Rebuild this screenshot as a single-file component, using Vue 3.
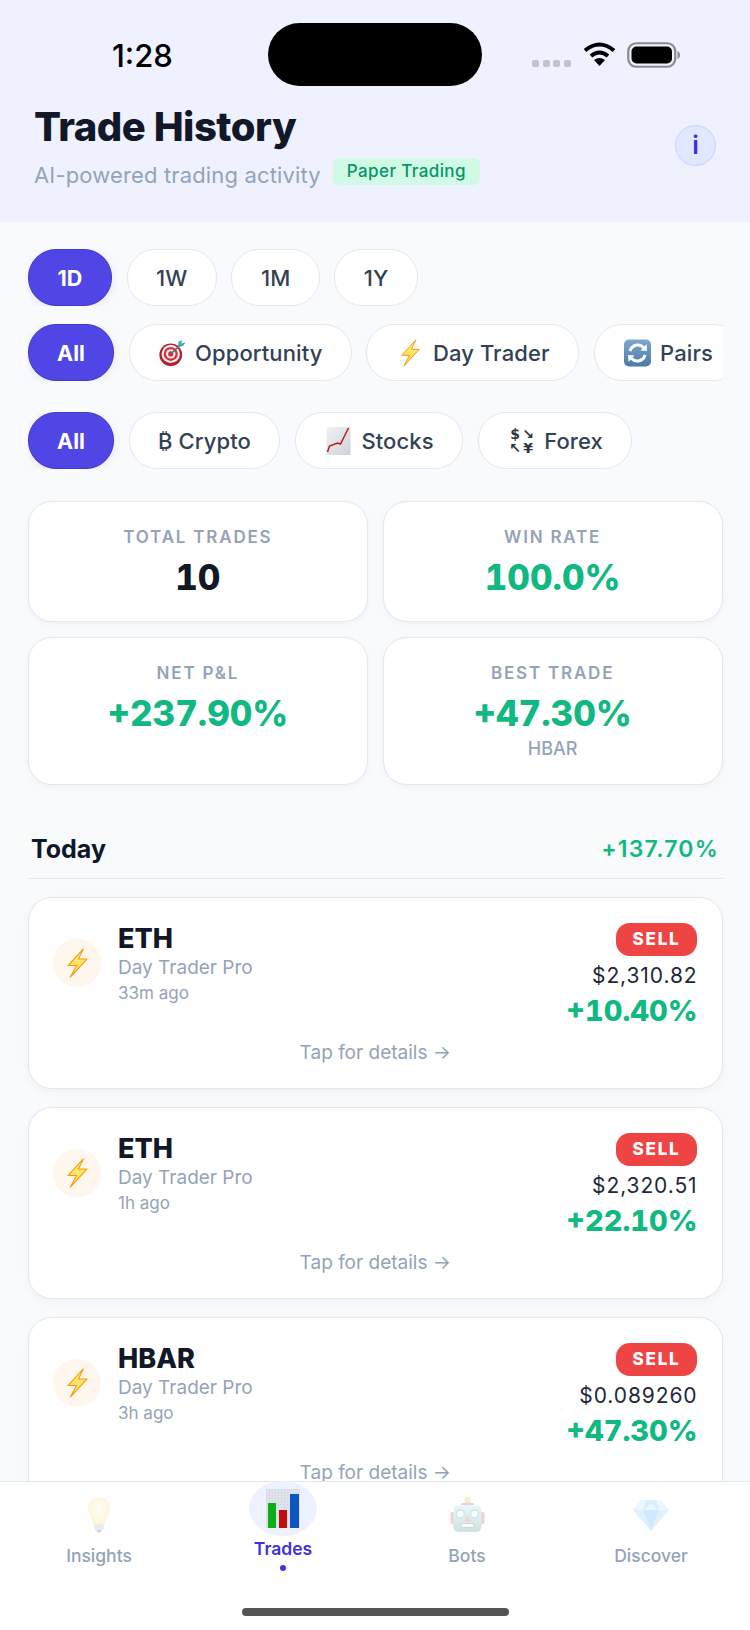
<template>
  <div class="screen">
    <svg class="sprite" width="0" height="0" aria-hidden="true">
      <defs>
        <linearGradient id="bolt-fill" x1="0" y1="0" x2="0" y2="1">
          <stop offset="0" stop-color="#fff08a" />
          <stop offset="1" stop-color="#ffd84a" />
        </linearGradient>
        <linearGradient id="sync-fill" x1="0" y1="0" x2="0" y2="1">
          <stop offset="0" stop-color="#7fa6cf" />
          <stop offset="1" stop-color="#4a7aa8" />
        </linearGradient>
        <linearGradient id="paper-fill" x1="0" y1="0" x2="1" y2="1">
          <stop offset="0" stop-color="#eef1f5" />
          <stop offset="1" stop-color="#cfd3d8" />
        </linearGradient>
        <linearGradient id="robot-fill" x1="0" y1="0" x2="0" y2="1">
          <stop offset="0" stop-color="#dfeeef" />
          <stop offset="1" stop-color="#a3c4c9" />
        </linearGradient>
        <radialGradient id="bulb-fill" cx="0.5" cy="0.4" r="0.6">
          <stop offset="0" stop-color="#fffdf2" />
          <stop offset="1" stop-color="#ffe9a8" />
        </radialGradient>
        <pattern id="grid-lines" width="3" height="3" patternUnits="userSpaceOnUse">
          <path d="M3 0H0V3" fill="none" stroke="#c9d0d9" stroke-width="0.6" />
        </pattern>
      </defs>
      <symbol id="target" viewBox="0 0 32 32">
        <circle cx="14" cy="18" r="13" fill="#b3202a" />
        <circle cx="14" cy="17" r="10.5" fill="#f4f1ee" />
        <circle cx="14" cy="17" r="8" fill="#d8303a" />
        <circle cx="14" cy="17" r="5.4" fill="#f4f1ee" />
        <circle cx="14" cy="17" r="3" fill="#d8303a" />
        <path d="M14 17L25 7" stroke="#5a6c78" stroke-width="1.6" />
        <path d="M22 9l1-6 4-2-1 4 5-1-3 4-6 1z" fill="#3fa9b8" />
      </symbol>
      <symbol id="bolt" viewBox="0 0 18 26">
        <path d="M14 .8L.8 15.2h7.4L2.8 25.2 17.2 9.6H9.800z" fill="url(#bolt-fill)" stroke="#f59a0b" stroke-width="0.9" stroke-linejoin="round" />
      </symbol>
      <symbol id="sync" viewBox="0 0 28 28">
        <rect x="0.5" y="0.5" width="27" height="27" rx="5" fill="url(#sync-fill)" />
        <path d="M6.5 12a8 8 0 0 1 13.5-3.5" fill="none" stroke="#fff" stroke-width="3" />
        <path d="M17 11.5l6.5.5-.5-7z" fill="#fff" />
        <path d="M21.5 16a8 8 0 0 1-13.5 3.5" fill="none" stroke="#fff" stroke-width="3" />
        <path d="M11 16.5l-6.5-.5.5 7z" fill="#fff" />
      </symbol>
      <symbol id="trend" viewBox="0 0 24 28">
        <rect width="24" height="28" fill="url(#paper-fill)" />
        <path d="M1 25l2-6 8-3 3 1 3-6 5-10" fill="none" stroke="#c4161c" stroke-width="1.5" />
      </symbol>
      <symbol id="bulb" viewBox="0 0 24 37">
        <path d="M12 1C5.500 1 1 6 1 12c0 6 4.500 10 6 19h10c1.500-9 6-13 6-19C23 6 18.500 1 12 1z" fill="url(#bulb-fill)" />
        <rect x="7.500" y="28" width="9" height="6" rx="1" fill="#d4d7da" />
        <path d="M9 34h6l-1.500 2.500h-3z" fill="#a8acb0" />
      </symbol>
      <symbol id="bars" viewBox="0 0 34 39">
        <rect width="34" height="39" fill="#dfe5ec" />
        <rect width="34" height="39" fill="url(#grid-lines)" />
        <rect x="2" y="14" width="8" height="25" fill="#0cae18" />
        <rect x="13" y="21" width="8" height="18" fill="#c40d0d" />
        <rect x="24" y="5" width="9" height="34" fill="#0b57bd" />
      </symbol>
      <symbol id="robot" viewBox="0 0 35 35">
        <rect x="0.500" y="15" width="5" height="12" rx="2" fill="#e6a5a5" />
        <rect x="29.500" y="15" width="5" height="12" rx="2" fill="#e6a5a5" />
        <rect x="15" y="3" width="5" height="5" fill="#b8adc9" />
        <circle cx="17.500" cy="3" r="3" fill="#ffd98a" />
        <rect x="11" y="6" width="13" height="3" rx="1.500" fill="#b8adc9" />
        <rect x="3.500" y="8" width="28" height="27" rx="5" fill="url(#robot-fill)" />
        <circle cx="10.500" cy="17" r="4" fill="#fff" stroke="#8fdcee" stroke-width="1.800" />
        <circle cx="24.500" cy="17" r="4" fill="#fff" stroke="#8fdcee" stroke-width="1.800" />
        <path d="M17.500 18l3 6h-6z" fill="#eda0a0" />
        <rect x="11" y="26.500" width="13" height="4" rx="1.500" fill="#f3f4f4" stroke="#7d8f92" stroke-width="0.600" />
      </symbol>
      <symbol id="gem" viewBox="0 0 36 32">
        <path d="M9 1h18l9 10-18 21L0 11z" fill="#bfe5fd" />
        <path d="M0 11h36L27 1H9z" fill="#d7f0ff" />
        <path d="M10 11h16l-8 21z" fill="#a5d6f8" />
        <path d="M13 1l-3 10 8-6 8 6-3-10z" fill="#b9dff9" />
      </symbol>
    </svg>

    <header class="top">
      <div class="status">
        <div class="status-left"><span class="clock">1:28</span></div>
        <div class="island"></div>
        <div class="status-right">
          <div class="signal">
            <i v-for="n in 4" :key="n"></i>
          </div>
          <svg class="wifi" width="33" height="24" viewBox="0 0 33 24">
            <path d="M2 8.500Q16.500 -3.500 31 8.500" fill="none" stroke="#000" stroke-width="4" />
            <path d="M8 14Q16.500 7 25 14" fill="none" stroke="#000" stroke-width="4" />
            <path d="M16.500 24L11 18Q16.500 14 22 18z" fill="#000" />
          </svg>
          <svg class="battery" width="53" height="26" viewBox="0 0 53 26">
            <rect x="1.250" y="1.250" width="47" height="23.500" rx="8" fill="none" stroke="#8a8a8e" stroke-width="2.200" />
            <rect x="4.500" y="4.500" width="40.500" height="17" rx="5" fill="#000" />
            <path d="M50.500 9c1.500.4 2.500 2 2.500 4s-1 3.600-2.500 4z" fill="#8a8a8e" />
          </svg>
        </div>
      </div>
      <div class="heading">
        <div>
          <h1>Trade History</h1>
          <div class="subline">
            <span class="subtitle">AI-powered trading activity</span>
            <span class="paper">Paper Trading</span>
          </div>
        </div>
        <button class="info" type="button">i</button>
      </div>
    </header>

    <main class="content">
      <div class="chips">
        <span v-for="(p, i) in periods" :key="p" class="chip" :class="{ active: i === 0 }">{{ p }}</span>
      </div>
      <div class="chips strategies">
        <span v-for="(s, i) in strategies" :key="s.label" class="chip wide" :class="{ active: i === 0 }">
          <svg v-if="s.icon" class="emoji"><use :href="'#' + s.icon" /></svg>
          {{ s.label }}
        </span>
      </div>
      <div class="chips markets">
        <span v-for="(m, i) in markets" :key="m.label" class="chip wide" :class="{ active: i === 0 }">
          <span v-if="m.icon === 'forex'" class="emoji forex">
            <b>$</b><b>↘</b><b>↖</b><b>¥</b>
          </span>
          <svg v-else-if="m.icon" class="emoji"><use :href="'#' + m.icon" /></svg>
          {{ m.label }}
        </span>
      </div>

      <section class="stats">
        <div v-for="s in stats" :key="s.label" class="stat">
          <div class="stat-label">{{ s.label }}</div>
          <div class="stat-value" :class="{ up: s.up }">{{ s.value }}</div>
          <div v-if="s.sub" class="stat-sub">{{ s.sub }}</div>
        </div>
      </section>

      <div class="day">
        <span class="day-name">Today</span>
        <span class="day-total">+137.70%</span>
      </div>

      <article v-for="t in trades" :key="t.price" class="trade">
        <div class="trade-row">
          <div class="trade-left">
            <div class="trade-icon">
              <svg width="21" height="30"><use href="#bolt" /></svg>
            </div>
            <div>
              <div class="symbol">{{ t.symbol }}</div>
              <div class="bot">Day Trader Pro</div>
              <div class="ago">{{ t.ago }}</div>
            </div>
          </div>
          <div class="trade-right">
            <span class="sell">SELL</span>
            <div class="price">{{ t.price }}</div>
            <div class="pnl">{{ t.pnl }}</div>
          </div>
        </div>
        <div class="tap">Tap for details →</div>
      </article>
    </main>

    <nav class="tabs">
      <div v-for="t in tabs" :key="t.label" class="tab" :class="{ current: t.current }">
        <div class="tab-icon">
          <svg :width="t.w" :height="t.h"><use :href="'#' + t.icon" /></svg>
        </div>
        <span class="tab-label">{{ t.label }}</span>
        <i v-if="t.current" class="tab-dot"></i>
      </div>
      <div class="home-bar"></div>
    </nav>
  </div>
</template>

<script setup>
const periods = ["1D", "1W", "1M", "1Y"];

const strategies = [
  { label: "All" },
  { label: "Opportunity", icon: "target" },
  { label: "Day Trader", icon: "bolt" },
  { label: "Pairs", icon: "sync" },
];

const markets = [
  { label: "All" },
  { label: "₿ Crypto" },
  { label: "Stocks", icon: "trend" },
  { label: "Forex", icon: "forex" },
];

const stats = [
  { label: "TOTAL TRADES", value: "10" },
  { label: "WIN RATE", value: "100.0%", up: true },
  { label: "NET P&L", value: "+237.90%", up: true },
  { label: "BEST TRADE", value: "+47.30%", up: true, sub: "HBAR" },
];

const trades = [
  { symbol: "ETH", ago: "33m ago", price: "$2,310.82", pnl: "+10.40%" },
  { symbol: "ETH", ago: "1h ago", price: "$2,320.51", pnl: "+22.10%" },
  { symbol: "HBAR", ago: "3h ago", price: "$0.089260", pnl: "+47.30%" },
];

const tabs = [
  { label: "Insights", icon: "bulb", w: 24, h: 37 },
  { label: "Trades", icon: "bars", w: 34, h: 39, current: true },
  { label: "Bots", icon: "robot", w: 35, h: 35 },
  { label: "Discover", icon: "gem", w: 36, h: 32 },
];
</script>

<style scoped>
.screen {
  position: relative;
  display: flex;
  flex-direction: column;
  width: 750px;
  height: 1630px;
  overflow: hidden;
  background: #f8fafc;
  font-family: Inter, "Liberation Sans", sans-serif;
  color: #0f172a;
}

.sprite {
  position: absolute;
}

.top {
  flex: none;
  height: 222px;
  background: #eff1ff;
}

.status {
  display: flex;
  padding-top: 23px;
}

.status-left {
  width: 268px;
  padding: 18px 0 0 112px;
  box-sizing: border-box;
}

.clock {
  font-size: 31px;
  line-height: 30px;
  font-weight: 500;
  color: #000;
}

.island {
  width: 214px;
  height: 63px;
  border-radius: 32px;
  background: #000;
}

.status-right {
  display: flex;
  align-items: flex-start;
  padding: 19px 0 0 50px;
}

.signal {
  display: flex;
  gap: 3.5px;
  margin: 18px 12px 0 0;
}

.signal i {
  width: 7px;
  height: 7px;
  border-radius: 2px;
  background: #bfc3cc;
}

.battery {
  margin: 0 0 0 11px;
}

.heading {
  display: flex;
  align-items: center;
  justify-content: space-between;
  padding: 17px 34px 0 34px;
}

h1 {
  margin: 0;
  font-size: 40px;
  line-height: 48px;
  font-weight: 800;
  letter-spacing: -0.5px;
  color: #111827;
}

.subline {
  display: flex;
  align-items: flex-start;
  gap: 12px;
  margin-top: 7px;
}

.subtitle {
  margin-top: 5px;
  font-size: 22px;
  line-height: 24px;
  letter-spacing: 0.15px;
  color: #94a3b8;
}

.paper {
  padding: 0 14px;
  border-radius: 6px;
  background: #d1fae5;
  font-size: 17px;
  line-height: 27px;
  font-weight: 500;
  letter-spacing: 0.4px;
  color: #059669;
}

.info {
  width: 41px;
  height: 41px;
  padding: 0;
  border: 1.5px solid #c7d2fe;
  border-radius: 50%;
  background: #e0e7ff;
  font-family: inherit;
  font-size: 25px;
  font-weight: 600;
  color: #3b2fdd;
}

.content {
  flex: 1;
  min-height: 0;
  overflow: hidden;
  padding: 27px 27px 0 28px;
}

.chips {
  display: flex;
  gap: 14.5px;
  overflow: hidden;
}

.strategies {
  margin-top: 18px;
}

.markets {
  margin-top: 31px;
}

.chip {
  flex: none;
  display: flex;
  align-items: center;
  justify-content: center;
  gap: 8px;
  box-sizing: border-box;
  height: 57px;
  padding: 0 28.5px;
  border: 1.5px solid #e2e8f0;
  border-radius: 28px;
  background: #fff;
  font-size: 22px;
  font-weight: 500;
  letter-spacing: 0.1px;
  color: #334155;
}

.chip.wide {
  padding: 0 28.5px;
}

.chip.active {
  border-color: #4338ca;
  background: #4f46e5;
  font-size: 21.5px;
  font-weight: 700;
  color: #fff;
  box-shadow: 0 2px 8px rgba(79, 70, 229, 0.12);
}

.chip.wide.active {
  padding: 0 28px;
}

.emoji {
  flex: none;
  width: 29px;
  height: 28px;
}

.forex {
  display: grid;
  grid-template-columns: 13px 13px;
  justify-content: center;
  align-content: center;
  font-family: "DejaVu Sans", sans-serif;
  font-size: 14px;
  line-height: 14px;
  text-align: center;
  color: #2f3238;
}

.forex b {
  font-weight: 700;
}

.stats {
  display: grid;
  grid-template-columns: 1fr 1fr;
  gap: 15px;
  margin: 32px 0.5px 0 0;
}

.stat {
  padding: 24px 10px 23px;
  border: 1.5px solid #e2e8f0;
  border-radius: 24px;
  background: #fff;
  text-align: center;
  box-shadow: 0 2px 6px rgba(15, 23, 42, 0.04);
}

.stat-label {
  font-size: 17px;
  line-height: 22px;
  font-weight: 600;
  letter-spacing: 1.8px;
  color: #94a3b8;
}

.stat-value {
  margin-top: 8px;
  font-size: 35px;
  line-height: 42px;
  font-weight: 800;
  font-variant-numeric: tabular-nums;
  color: #111827;
}

.stat-value.up {
  color: #10b981;
}

.stat-sub {
  margin-top: 2px;
  font-size: 18px;
  line-height: 25px;
  font-weight: 500;
  color: #94a3b8;
}

.day {
  display: flex;
  align-items: center;
  justify-content: space-between;
  height: 38px;
  margin: 45px 0 0;
  padding: 0 4px 9.5px 3px;
  border-bottom: 1.5px solid #e2e8f0;
}

.day-name {
  font-size: 25px;
  font-weight: 700;
  color: #0f172a;
}

.day-total {
  font-size: 23px;
  font-weight: 600;
  letter-spacing: 1.2px;
  color: #10b981;
}

.trade {
  margin: 18px 0.5px 0 0;
  padding: 25px 24px 23px;
  border: 1.5px solid #e2e8f0;
  border-radius: 24px;
  background: #fff;
  box-shadow: 0 3px 8px rgba(15, 23, 42, 0.04);
}

.trade-row {
  display: flex;
  align-items: flex-start;
  justify-content: space-between;
}

.trade-left {
  display: flex;
  align-items: center;
  gap: 17px;
}

.trade-icon {
  display: flex;
  align-items: center;
  justify-content: center;
  width: 48px;
  height: 48px;
  border-radius: 50%;
  background: #fff7ed;
}

.symbol {
  font-size: 27px;
  line-height: 32px;
  font-weight: 800;
  color: #111827;
}

.bot {
  margin-top: 1px;
  font-size: 19px;
  line-height: 24px;
  color: #94a3b8;
}

.ago {
  margin-top: 2px;
  font-size: 17px;
  line-height: 22px;
  color: #94a3b8;
}

.trade-right {
  display: flex;
  flex-direction: column;
  align-items: flex-end;
}

.sell {
  margin-right: 1px;
  padding: 0 16px;
  border-radius: 14px;
  background: #ef4444;
  font-size: 17px;
  line-height: 33px;
  font-weight: 800;
  letter-spacing: 1.8px;
  color: #fff;
}

.price {
  margin-top: 7px;
  font-size: 21px;
  line-height: 26px;
  letter-spacing: 0.9px;
  color: #1e293b;
}

.pnl {
  margin-top: 4px;
  font-size: 29px;
  line-height: 36px;
  font-weight: 800;
  font-variant-numeric: tabular-nums;
  color: #10b981;
}

.tap {
  margin-top: 12px;
  font-size: 19px;
  line-height: 24px;
  text-align: center;
  color: #94a3b8;
}

.tabs {
  position: relative;
  flex: none;
  display: flex;
  box-sizing: border-box;
  height: 149px;
  padding: 0 7px;
  border-top: 1.5px solid #e2e8f0;
  background: #fff;
}

.tab {
  flex: 1;
  display: flex;
  flex-direction: column;
  align-items: center;
}

.tab-icon {
  display: flex;
  align-items: center;
  justify-content: center;
  height: 55px;
  margin-top: 5px;
  opacity: 0.5;
}

.tab-label {
  margin-top: 2px;
  font-size: 17.5px;
  line-height: 24px;
  font-weight: 500;
  color: #94a3b8;
}

.tab.current .tab-icon {
  width: 68px;
  margin-top: -1px;
  border-radius: 50%;
  background: #eef2ff;
  opacity: 1;
}

.tab.current .tab-label {
  margin-top: 1px;
  font-weight: 600;
  color: #3f30e0;
}

.tab-dot {
  width: 6px;
  height: 6px;
  margin-top: 4px;
  border-radius: 50%;
  background: #3f30e0;
}

.home-bar {
  position: absolute;
  left: 242px;
  bottom: 14px;
  width: 267px;
  height: 8px;
  border-radius: 4px;
  background: #555;
}
</style>
